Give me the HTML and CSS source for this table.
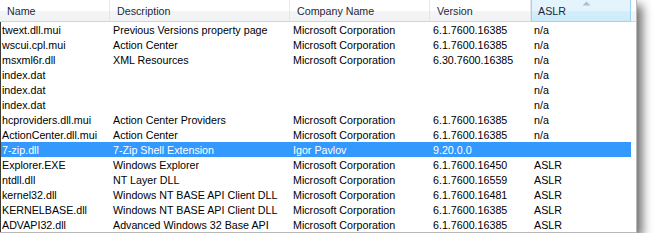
FILE: index.html
```html
<!DOCTYPE html>
<html>
<head>
<meta charset="utf-8">
<link rel="stylesheet" href="styles.css">
</head>
<body>
<div class="window">
  <div class="header">
    <div class="hcell">Name</div>
    <div class="hcell">Description</div>
    <div class="hcell">Company Name</div>
    <div class="hcell">Version</div>
    <div class="hcell sorted">ASLR
      <svg class="sort" width="9" height="5" viewBox="0 0 9 5"><path d="M0.5 4.5 L4.5 0.5 L8.5 4.5 Z" fill="#a9bfd6"/></svg>
    </div>
    <div class="hfill"></div>
  </div>
  <div class="list">
    <div class="row"><span>twext.dll.mui</span><span>Previous Versions property page</span><span>Microsoft Corporation</span><span>6.1.7600.16385</span><span>n/a</span></div>
    <div class="row"><span>wscui.cpl.mui</span><span>Action Center</span><span>Microsoft Corporation</span><span>6.1.7600.16385</span><span>n/a</span></div>
    <div class="row"><span>msxml6r.dll</span><span>XML Resources</span><span>Microsoft Corporation</span><span>6.30.7600.16385</span><span>n/a</span></div>
    <div class="row"><span>index.dat</span><span></span><span></span><span></span><span>n/a</span></div>
    <div class="row"><span>index.dat</span><span></span><span></span><span></span><span>n/a</span></div>
    <div class="row"><span>index.dat</span><span></span><span></span><span></span><span>n/a</span></div>
    <div class="row"><span>hcproviders.dll.mui</span><span>Action Center Providers</span><span>Microsoft Corporation</span><span>6.1.7600.16385</span><span>n/a</span></div>
    <div class="row"><span>ActionCenter.dll.mui</span><span>Action Center</span><span>Microsoft Corporation</span><span>6.1.7600.16385</span><span>n/a</span></div>
    <div class="row selected"><span>7-zip.dll</span><span>7-Zip Shell Extension</span><span>Igor Pavlov</span><span>9.20.0.0</span><span></span></div>
    <div class="row"><span>Explorer.EXE</span><span>Windows Explorer</span><span>Microsoft Corporation</span><span>6.1.7600.16450</span><span>ASLR</span></div>
    <div class="row"><span>ntdll.dll</span><span>NT Layer DLL</span><span>Microsoft Corporation</span><span>6.1.7600.16559</span><span>ASLR</span></div>
    <div class="row"><span>kernel32.dll</span><span>Windows NT BASE API Client DLL</span><span>Microsoft Corporation</span><span>6.1.7600.16481</span><span>ASLR</span></div>
    <div class="row"><span>KERNELBASE.dll</span><span>Windows NT BASE API Client DLL</span><span>Microsoft Corporation</span><span>6.1.7600.16385</span><span>ASLR</span></div>
    <div class="row"><span>ADVAPI32.dll</span><span>Advanced Windows 32 Base API</span><span>Microsoft Corporation</span><span>6.1.7600.16385</span><span>ASLR</span></div>
  </div>
</div>
</body>
</html>
```
FILE: styles.css
```css
html, body {
  margin: 0;
  padding: 0;
  background: #ffffff;
}
body {
  font-family: "Liberation Sans", Arial, sans-serif;
  font-size: 10.7px;
  color: #000;
}
.window {
  width: 637px;
  height: 233px;
  background: #fff;
  box-sizing: border-box;
  border-right: 1px solid #b8b8b8;
  border-bottom: 1px solid #b8b8b8;
  box-shadow: 5px 5px 10px rgba(0, 0, 0, 0.6);
  display: flex;
  flex-direction: column;
  overflow: hidden;
}
.header {
  display: grid;
  grid-template-columns: 110px 180px 140px 101px 100px 1fr;
  height: 22px;
  box-sizing: border-box;
  border-bottom: 1px solid #d5d5d5;
  background: linear-gradient(#ffffff 0%, #ffffff 50%, #f4f5f7 51%, #f1f2f4 100%);
}
.hcell {
  position: relative;
  display: flex;
  align-items: center;
  padding-left: 7px;
  border-right: 1px solid #e3e6ea;
  color: #1e2838;
  white-space: nowrap;
}
.hcell.sorted {
  background: linear-gradient(#e3f4fc 0%, #e3f4fc 50%, #d4eefb 51%, #cdeafa 100%);
  border: 1px solid #99d6f3;
  border-top: none;
  margin-bottom: -1px;
  padding-left: 6px;
}
.sort {
  position: absolute;
  left: 50px;
  top: 1px;
}
.hfill {
  background: transparent;
}
.list {
  flex: 1;
  border-left: 1px solid #3a3a3a;
}
.row {
  display: grid;
  grid-template-columns: 109px 180px 140px 101px 100px;
  height: 15px;
  align-items: center;
  white-space: nowrap;
}
.row span {
  padding-left: 3px;
  overflow: hidden;
}
.row span:first-child {
  padding-left: 1px;
}
.row.selected {
  background: #3399ff;
  color: #fff;
  width: 630px;
}
```
